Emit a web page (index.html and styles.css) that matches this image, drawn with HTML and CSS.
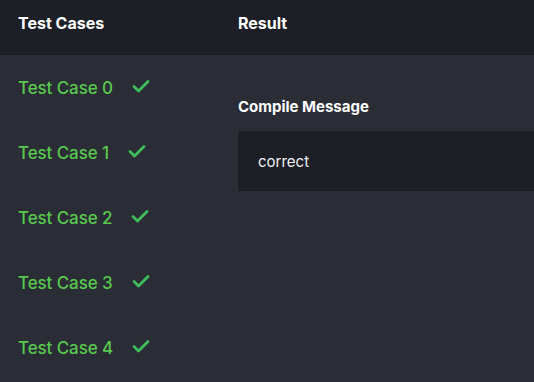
FILE: index.html
```html
<!DOCTYPE html>
<html>
<head>
<meta charset="utf-8">
<link rel="stylesheet" href="styles.css">
</head>
<body>
<div class="page">
  <div class="header">
    <div class="col-left"><span class="title">Test Cases</span></div>
    <div class="col-right"><span class="title">Result</span></div>
  </div>
  <div class="body">
    <div class="cases">
      <div class="case"><span class="name">Test Case 0</span><svg class="check" viewBox="0 0 18 14"><path d="M2 7.5l4.5 4.5L16 2.5" fill="none" stroke="currentColor" stroke-width="2.8" stroke-linecap="round" stroke-linejoin="round"/></svg></div>
      <div class="case"><span class="name">Test Case 1</span><svg class="check" viewBox="0 0 18 14"><path d="M2 7.5l4.5 4.5L16 2.5" fill="none" stroke="currentColor" stroke-width="2.8" stroke-linecap="round" stroke-linejoin="round"/></svg></div>
      <div class="case"><span class="name">Test Case 2</span><svg class="check" viewBox="0 0 18 14"><path d="M2 7.5l4.5 4.5L16 2.5" fill="none" stroke="currentColor" stroke-width="2.8" stroke-linecap="round" stroke-linejoin="round"/></svg></div>
      <div class="case"><span class="name">Test Case 3</span><svg class="check" viewBox="0 0 18 14"><path d="M2 7.5l4.5 4.5L16 2.5" fill="none" stroke="currentColor" stroke-width="2.8" stroke-linecap="round" stroke-linejoin="round"/></svg></div>
      <div class="case"><span class="name">Test Case 4</span><svg class="check" viewBox="0 0 18 14"><path d="M2 7.5l4.5 4.5L16 2.5" fill="none" stroke="currentColor" stroke-width="2.8" stroke-linecap="round" stroke-linejoin="round"/></svg></div>
    </div>
    <div class="result">
      <div class="section-title">Compile Message</div>
      <div class="message">correct</div>
    </div>
  </div>
</div>
</body>
</html>
```

FILE: styles.css
```css
html, body {
  margin: 0;
  padding: 0;
  background: #2a2d35;
}
body {
  font-family: "Inter", "Lato", sans-serif;
  color: #ffffff;
  width: 534px;
  height: 382px;
  overflow: hidden;
}
.page {
  display: flex;
  flex-direction: column;
  height: 382px;
}
.header {
  display: flex;
  height: 55px;
  background: #1d1f27;
}
.col-left {
  width: 220px;
  padding-left: 18px;
  box-sizing: border-box;
  padding-top: 12px;
}
.col-right {
  flex: 1;
  padding-left: 18px;
  padding-top: 12px;
}
.title {
  font-weight: 700;
  font-size: 16px;
  line-height: 22px;
}
.body {
  display: flex;
  flex: 1;
}
.cases {
  width: 220px;
  display: flex;
  flex-direction: column;
}
.case {
  height: 65px;
  display: flex;
  align-items: center;
  padding-left: 18px;
}
.name {
  font-size: 17px;
  font-weight: 500;
  color: #58c84e;
  letter-spacing: -0.1px;
}
.check {
  width: 18px;
  height: 14px;
  margin-left: 19px;
  margin-top: -4px;
  color: #40bd5b;
}
.result {
  flex: 1;
  padding-left: 18px;
  padding-top: 41px;
}
.section-title {
  font-weight: 700;
  font-size: 15px;
  line-height: 22px;
  margin-bottom: 13px;
}
.message {
  background: #1d1f27;
  height: 60px;
  display: flex;
  align-items: center;
  padding-left: 20px;
  font-size: 15px;
  color: #f0f0f0;
}
```
